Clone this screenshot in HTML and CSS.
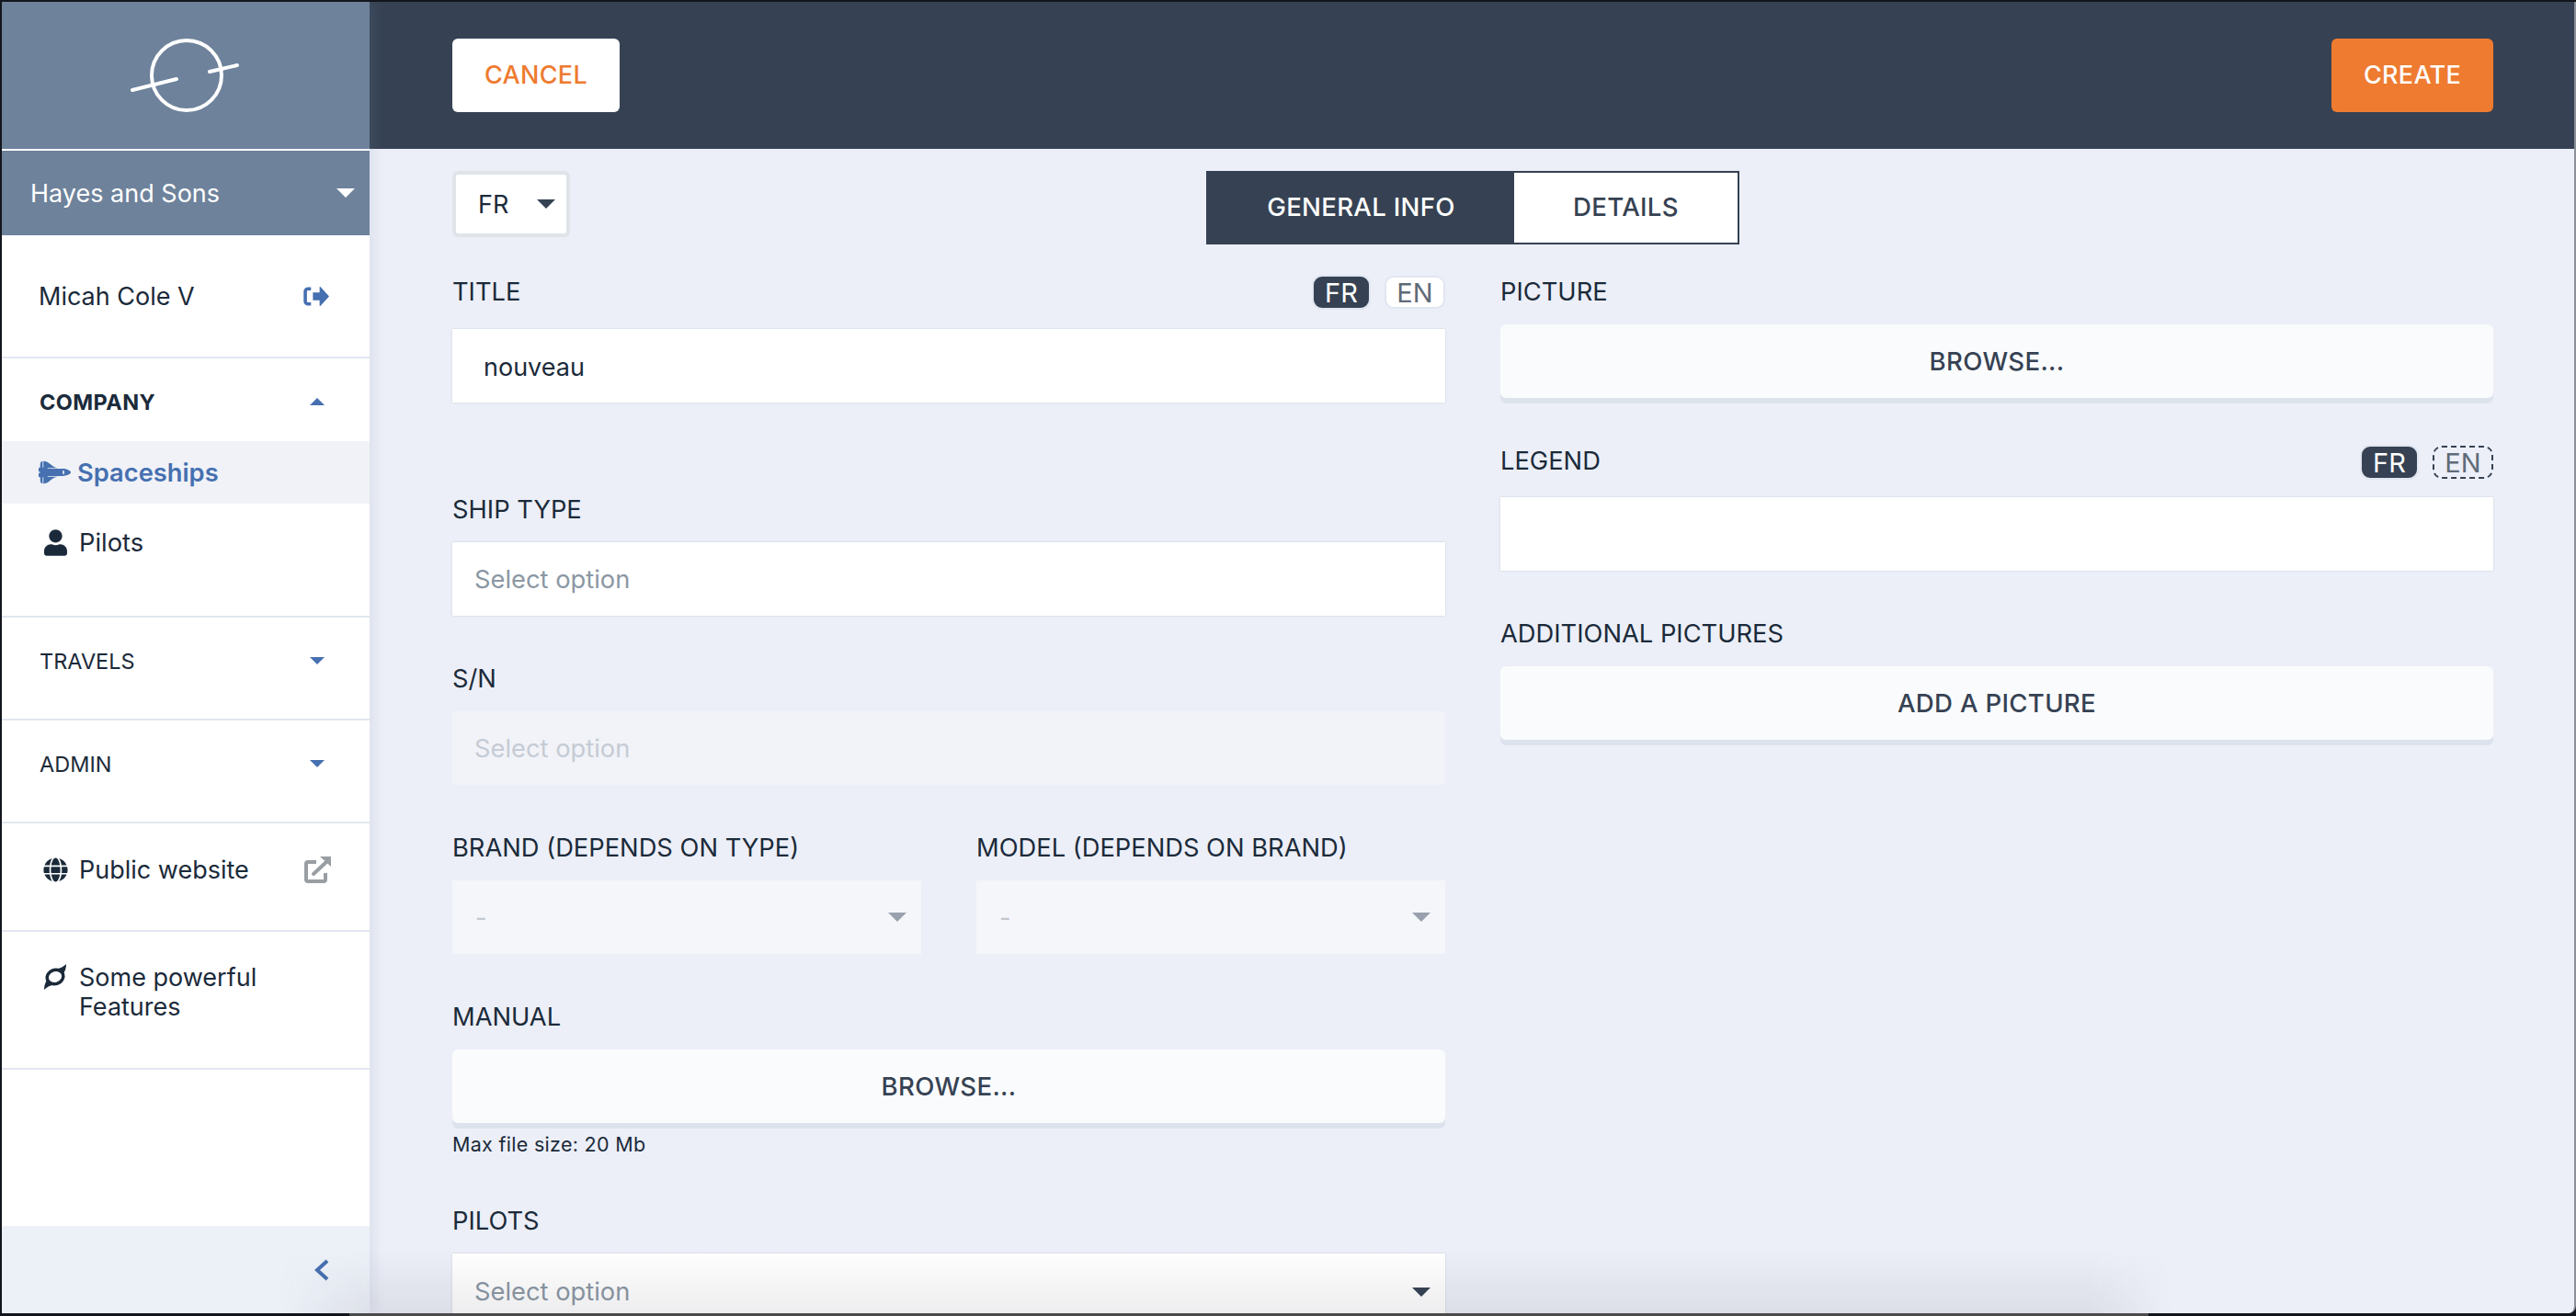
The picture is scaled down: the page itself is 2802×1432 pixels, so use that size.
FILE: index.html
```html
<!DOCTYPE html>
<html lang="en">
<head>
<meta charset="utf-8">
<title>New spaceship</title>
<link rel="stylesheet" href="styles.css">
</head>
<body>
<div class="app">
  <aside class="sidebar">
    <div class="logo">
      <svg width="120" height="84" viewBox="0 0 120 84" fill="none" stroke="#fff" stroke-width="4" stroke-linecap="round"><circle cx="61" cy="42" r="38"/><path d="M2 58 L50 46"/><path d="M86 38 L116 31"/></svg>
    </div>
    <div class="company"><span>Hayes and Sons</span><i class="caret caret-white"></i></div>
    <div class="nav-row user">
      <span>Micah Cole V</span>
      <svg class="side-end" width="28" height="21" viewBox="0 0 27 20"><path d="M8 2H5a3 3 0 0 0-3 3v10a3 3 0 0 0 3 3h3" fill="none" stroke="#4670b0" stroke-width="3.500"/><path d="M10 6h7V0.500a0.500 0.500 0 0 1 1-0.300L27 10l-9 9.800a0.500 0.500 0 0 1-1-0.300V14h-7z" fill="#4670b0"/></svg>
    </div>
    <section class="group">
      <div class="group-head"><strong>COMPANY</strong><i class="caret caret-blue-up"></i></div>
      <a class="item active">
        <svg class="item-icon" width="35" height="28" viewBox="0 0 640 512" fill="#4670b0"><path d="M592.604 208.244C559.735 192.836 515.777 184 472 184H186.327c-4.952-6.555-10.585-11.978-16.720-16H376C229.157 137.747 219.403 32 96.003 32H96v128H80V32c-26.510 0-48 28.654-48 64v64c-23.197 0-32 10.032-32 24v40c0 13.983 8.819 24 32 24v16c-23.197 0-32 10.032-32 24v40c0 13.983 8.819 24 32 24v64c0 35.346 21.490 64 48 64V352h16v128h.003c123.400 0 133.154-105.747 279.997-136H169.606c6.135-4.022 11.768-9.445 16.720-16H472c43.777 0 87.735-8.836 120.604-24.244C622.282 289.845 640 271 640 256s-17.718-33.845-47.396-47.756zM488 296a8 8 0 0 1-8-8v-64a8 8 0 0 1 8-8c31.909 0 31.942 80 0 80z"/></svg>
        <span>Spaceships</span>
      </a>
      <a class="item item-low">
        <span class="icon-slot"><svg width="25" height="29" viewBox="0 0 448 512" fill="#1b2a3a"><path d="M224 256c70.700 0 128-57.300 128-128S294.700 0 224 0 96 57.300 96 128s57.300 128 128 128zm89.600 32h-16.700c-22.200 10.200-46.900 16-72.900 16s-50.600-5.800-72.900-16h-16.700C60.200 288 0 348.200 0 422.400V464c0 26.500 21.500 48 48 48h352c26.500 0 48-21.500 48-48v-41.600c0-74.200-60.200-134.400-134.400-134.400z"/></svg></span>
        <span>Pilots</span>
      </a>
    </section>
    <div class="nav-row collapsed"><span class="small-title">TRAVELS</span><i class="caret caret-blue"></i></div>
    <div class="nav-row collapsed"><span class="small-title">ADMIN</span><i class="caret caret-blue"></i></div>
    <div class="nav-row public">
      <span class="icon-slot"><svg width="27" height="27" viewBox="0 0 496 512" fill="#1b2a3a"><path d="M336.500 160C322 70.700 287.800 8 248 8s-74 62.700-88.500 152h177zM152 256c0 22.200 1.200 43.500 3.300 64h185.300c2.100-20.500 3.300-41.800 3.300-64s-1.200-43.500-3.300-64H155.300c-2.100 20.500-3.300 41.800-3.300 64zm324.700-96c-28.600-67.900-86.500-120.400-158-141.600 24.400 33.800 41.200 84.700 50 141.600h108zM177.200 18.400C105.800 39.600 47.800 92.100 19.300 160h108c8.700-56.900 25.500-107.800 49.900-141.600zM487.400 192H372.700c2.100 21 3.300 42.500 3.300 64s-1.200 43-3.300 64h114.600c5.500-20.500 8.600-41.800 8.600-64s-3.100-43.500-8.500-64zM120 256c0-21.500 1.200-43 3.300-64H8.600C3.200 212.500 0 233.800 0 256s3.200 43.500 8.600 64h114.600c-2-21-3.200-42.500-3.200-64zm39.500 96c14.500 89.300 48.700 152 88.500 152s74-62.700 88.500-152h-177zm159.300 141.600c71.400-21.200 129.400-73.700 158-141.600h-108c-8.800 56.900-25.600 107.800-50 141.600zM19.300 352c28.600 67.900 86.500 120.400 158 141.600-24.400-33.800-41.200-84.700-50-141.600h-108z"/></svg></span>
      <span class="grow">Public website</span>
      <svg class="side-end" width="29" height="29" viewBox="0 0 29 29" fill="none" stroke="#999ea3" stroke-width="4"><path d="M13 6H4a2 2 0 0 0-2 2v17a2 2 0 0 0 2 2h17a2 2 0 0 0 2-2v-7"/><path d="M10 19L24 6" stroke-linecap="round"/><path d="M17 0h12v11z" fill="#999ea3" stroke="none"/></svg>
    </div>
    <div class="nav-row features">
      <span class="icon-slot feature-icon"><svg width="24" height="28" viewBox="0 0 24 28" fill="none" stroke="#1b2a3a" stroke-width="3.500"><ellipse cx="12" cy="14" rx="9" ry="7.600" transform="rotate(-20 12 14)"/><path d="M13 5.500C17 5 21 3 24 0c0 4-1 8-3.500 11z" fill="#1b2a3a" stroke="none"/><path d="M11 22.500C7 23 3 25 0 28c0-4 1-8 3.500-11z" fill="#1b2a3a" stroke="none"/></svg></span>
      <span class="features-text">Some powerful Features</span>
    </div>
    <div class="side-foot">
      <svg width="16" height="24" viewBox="0 0 16 24" fill="none" stroke="#4670b0" stroke-width="4"><path d="M14 2L3 12l11 10"/></svg>
    </div>
  </aside>

  <main class="main">
    <header class="topbar">
      <button class="btn btn-cancel">CANCEL</button>
      <button class="btn btn-create">CREATE</button>
    </header>
    <div class="body">
      <div class="tool-row">
        <div class="lang-select"><span>FR</span><i class="caret caret-dark"></i></div>
        <div class="tabs"><span class="tab tab-on">GENERAL INFO</span><span class="tab tab-off">DETAILS</span></div>
      </div>
      <div class="columns">
        <div class="col">
          <div class="field field-title">
            <div class="label label-loc"><span>TITLE</span>
              <span class="badges"><span class="badge badge-on">FR</span><span class="badge badge-off">EN</span></span>
            </div>
            <div class="input input-value">nouveau</div>
          </div>
          <div class="field">
            <div class="label">SHIP TYPE</div>
            <div class="input input-placeholder">Select option</div>
          </div>
          <div class="field">
            <div class="label">S/N</div>
            <div class="input input-disabled">Select option</div>
          </div>
          <div class="pair">
            <div class="field">
              <div class="label">BRAND (DEPENDS ON TYPE)</div>
              <div class="input input-off-select"><span>-</span><i class="caret caret-gray"></i></div>
            </div>
            <div class="field">
              <div class="label">MODEL (DEPENDS ON BRAND)</div>
              <div class="input input-off-select"><span>-</span><i class="caret caret-gray"></i></div>
            </div>
          </div>
          <div class="field">
            <div class="label">MANUAL</div>
            <div class="browse">BROWSE...</div>
            <div class="note">Max file size: 20 Mb</div>
          </div>
          <div class="field">
            <div class="label">PILOTS</div>
            <div class="input input-placeholder input-select"><span>Select option</span><i class="caret caret-dark"></i></div>
          </div>
        </div>
        <div class="col">
          <div class="field">
            <div class="label">PICTURE</div>
            <div class="browse">BROWSE...</div>
          </div>
          <div class="field field-legend">
            <div class="label label-loc"><span>LEGEND</span>
              <span class="badges"><span class="badge badge-on">FR</span><span class="badge badge-dashed">EN</span></span>
            </div>
            <div class="input"></div>
          </div>
          <div class="field">
            <div class="label">ADDITIONAL PICTURES</div>
            <div class="browse">ADD A PICTURE</div>
          </div>
        </div>
      </div>
    </div>
  </main>
  <div class="window-shadow"></div>
  <div class="window-edge"></div>
</div>
</body>
</html>
```

FILE: styles.css
```css
* { box-sizing: border-box; }
html, body { height: 100%; }
body {
  margin: 0;
  background: #12161c;
  font-family: Inter, "Liberation Sans", sans-serif;
  color: #1b2a3a;
  overflow: hidden;
}
.app {
  position: relative;
  display: flex;
  margin: 2px 0 0 2px;
  height: 1427px;
  border-right: 2px solid #8b9099;
  border-bottom-right-radius: 8px;
  background: #eceff7;
  overflow: hidden;
}

/* Sidebar */
.sidebar {
  flex: 0 0 400px;
  display: flex;
  flex-direction: column;
  background: #fff;
  box-shadow: 6px 0 10px rgba(120, 140, 180, 0.12);
  position: relative;
  z-index: 1;
}
.logo {
  height: 160px;
  background: #6e829b;
  display: flex;
  align-items: center;
  justify-content: center;
  padding-right: 1px;
}
.company {
  margin-top: 2px;
  height: 92px;
  background: #6e829b;
  color: #fff;
  font-size: 27px;
  display: flex;
  align-items: center;
  justify-content: space-between;
  padding: 0 16px 0 31px;
}
.nav-row {
  display: flex;
  align-items: center;
  padding: 0 41px;
  border-bottom: 2px solid #e1e6f0;
  font-size: 27px;
}
.user { height: 134px; justify-content: space-between; padding: 0 44px 0 40px; }
.group { height: 282px; border-bottom: 2px solid #e1e6f0; }
.group-head {
  height: 90px;
  display: flex;
  align-items: center;
  justify-content: space-between;
  padding: 4px 49px 0 41px;
  font-size: 23.500px;
  letter-spacing: 0.4px;
}
.item {
  height: 68px;
  display: flex;
  align-items: center;
  padding-left: 40px;
  font-size: 27.300px;
}
.item-low { padding-top: 16px; }
.item.active { background: #f0f2f7; color: #4670b0; font-weight: 600; }
.item-icon { margin-right: 7px; flex: none; }
.icon-slot { width: 44px; display: flex; justify-content: center; padding-right: 8px; flex: none; }
.collapsed { height: 112px; justify-content: space-between; padding: 0 49px 16px 41px; }
.small-title { font-size: 23.500px; }
.public { height: 118px; padding: 0 42px 16px 40px; }
.grow { flex: 1; }
.side-end { flex: none; }
.features { height: 150px; align-items: flex-start; padding: 34px 41px 0 40px; line-height: 32px; }
.feature-icon { padding-top: 1px; }
.features-text { width: 240px; }
.side-foot {
  margin-top: auto;
  height: 95px;
  background: #ecf0f7;
  display: flex;
  align-items: center;
  justify-content: flex-end;
  padding: 0 44px 0 0;
}

/* Carets */
.caret { display: inline-block; width: 0; height: 0; border-style: solid; flex: none; }
.caret-white { border-width: 10px 10px 0; border-color: #fff transparent transparent; }
.caret-dark { border-width: 10px 10px 0; border-color: #364253 transparent transparent; }
.caret-gray { border-width: 10px 10px 0; border-color: #99a1ae transparent transparent; }
.caret-blue { border-width: 8px 8px 0; border-color: #4670b0 transparent transparent; }
.caret-blue-up { border-width: 0 8px 8px; border-color: transparent transparent #4670b0; }

/* Main */
.main { flex: 1; min-width: 0; display: flex; flex-direction: column; }
.topbar {
  height: 160px;
  flex: none;
  background: #364253;
  display: flex;
  align-items: center;
  justify-content: space-between;
  padding: 0 88px 0 90px;
}
.btn {
  height: 80px;
  border: 0;
  border-radius: 6px;
  padding: 0 0 2px;
  font-family: inherit;
  font-size: 27px;
  font-weight: 500;
  letter-spacing: 0.3px;
}
.btn-cancel { width: 182px; background: #fff; color: #ee7b30; }
.btn-create { width: 176px; background: #ee7b30; color: #fff; }
.body { padding: 24px 88px 0 90px; }
.tool-row { position: relative; display: flex; justify-content: center; height: 80px; }
.lang-select {
  position: absolute;
  left: 0;
  top: 0;
  width: 128px;
  height: 72px;
  background: #fff;
  border: 4px solid #e0e4e9;
  border-radius: 6px;
  display: flex;
  align-items: center;
  justify-content: space-between;
  padding: 0 12px 0 24px;
  font-size: 27px;
}
.tabs { display: flex; width: 580px; border: 2px solid #364253; }
.tab { display: flex; align-items: center; justify-content: center; padding-bottom: 2px; font-size: 27.600px; font-weight: 500; letter-spacing: 0.3px; }
.tab-on { width: 333px; background: #364253; color: #fff; }
.tab-off { flex: 1; background: #fff; color: #364253; }

.columns { display: grid; grid-template-columns: 1080px 1080px; gap: 60px; margin-top: 31px; }
.col { display: flex; flex-direction: column; gap: 48px; }
.pair { display: grid; grid-template-columns: 510px 510px; gap: 60px; }
.label {
  height: 40px;
  margin-bottom: 16px;
  display: flex;
  align-items: center;
  font-size: 27.300px;
  white-space: nowrap;
}
.label-loc { justify-content: space-between; }
.field-title { margin-bottom: 48px; }
.field-title .label { margin-bottom: 21px; }
.field-legend .label { margin-bottom: 20px; }
.field-title .badges { margin-top: 2px; }
.field-legend .badges { margin-top: 4px; }
.badges { display: flex; gap: 16px; }
.badge {
  height: 36px;
  width: 62px;
  border-radius: 10px;
  display: flex;
  align-items: center;
  justify-content: center;
  font-size: 29px;
}
.badge-on { background: #364253; color: #fff; outline: 2px solid #e1e6f0; outline-offset: -1px; }
.badge-off { width: 66px; background: #fff; color: #5f6b78; border: 2px solid #e1e6f0; }
.badge-dashed { width: 66px; color: #5f6b78; border: 2px dashed #364253; }
.input {
  height: 80px;
  background: #fff;
  box-shadow: 0 0 2px rgba(120, 130, 150, 0.3);
  display: flex;
  align-items: center;
  font-size: 27.300px;
}
.input-value { padding: 2px 0 0 34px; font-size: 27px; }
.input-placeholder { padding-left: 24px; color: #8b97a3; }
.input-disabled { padding-left: 24px; background: #f1f3f8; color: #c6cbd4; box-shadow: none; }
.input-off-select {
  background: #f4f6fa;
  color: #c3c8d0;
  justify-content: space-between;
  padding: 0 16px 0 25px;
  box-shadow: none;
}
.input-select { justify-content: space-between; padding-top: 3px; padding-right: 16px; }
.browse {
  height: 80px;
  background: #fafbfd;
  border-radius: 6px;
  box-shadow: 0 6px 0 #dde3ed;
  display: flex;
  align-items: center;
  justify-content: center;
  font-size: 27.600px;
  font-weight: 500;
  letter-spacing: 0.3px;
  color: #364253;
}
.note { height: 30px; margin-top: 8px; display: flex; align-items: center; font-size: 21.500px; letter-spacing: 0.3px; }

/* Window chrome over the page */
.window-shadow {
  position: absolute;
  left: 300px;
  width: 2060px;
  bottom: 0;
  height: 70px;
  background: linear-gradient(to bottom, rgba(60, 60, 80, 0), rgba(60, 60, 80, 0.09));
  -webkit-mask-image: linear-gradient(to right, transparent, #000 110px, #000 1970px, transparent);
  mask-image: linear-gradient(to right, transparent, #000 110px, #000 1970px, transparent);
  pointer-events: none;
  z-index: 2;
}
.window-edge { position: fixed; left: 380px; width: 1957px; top: 1429px; height: 3px; background: #4a4a4a; z-index: 3; }
```
